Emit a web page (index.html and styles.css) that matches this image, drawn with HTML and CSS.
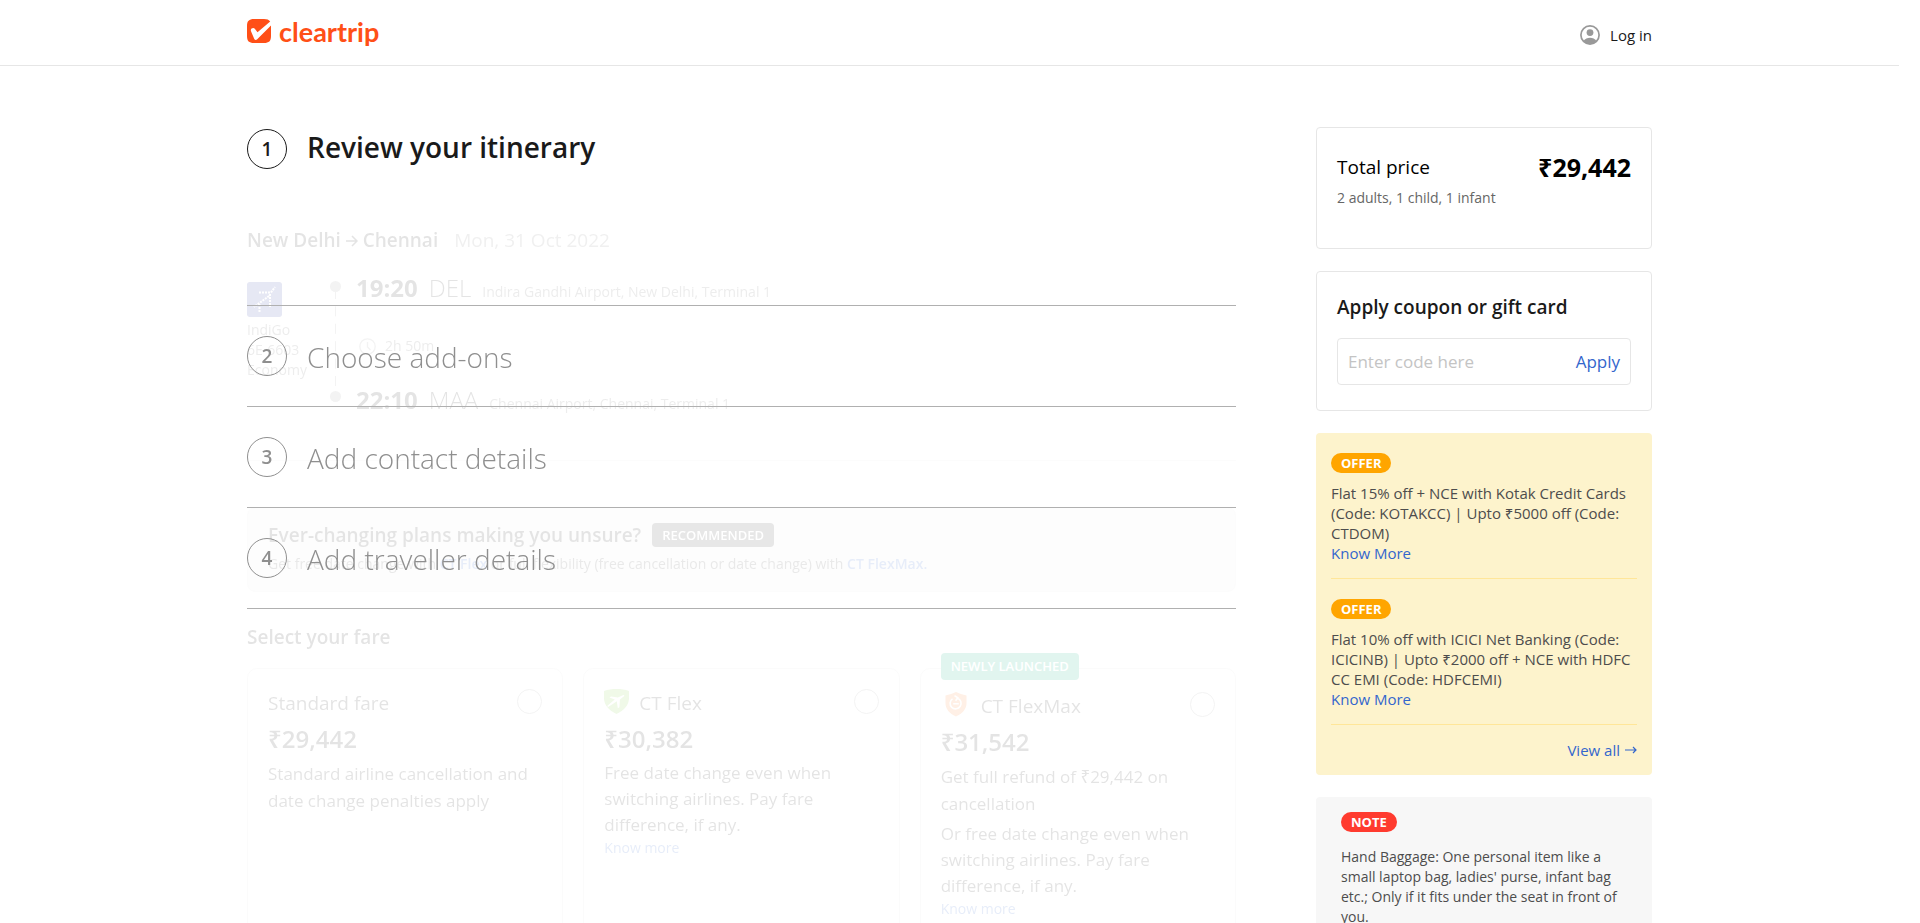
FILE: index.html
```html
<!DOCTYPE html>
<html lang="en">
<head>
<meta charset="utf-8">
<title>Cleartrip | Review your itinerary</title>
<link rel="stylesheet" href="styles.css">
</head>
<body>
<header class="topbar">
  <div class="container topbar-row">
    <a class="brand" href="#" aria-label="Cleartrip home">
      <svg class="brand-mark" viewBox="0 0 24 24" aria-hidden="true">
        <path fill="#ff4f17" d="M7 0h10c3 0 5 .8 6.200 2.600L10.500 13.200 7.800 9.700C6.300 8.200 3 9.600 4 12.200l3.200 7.600c.6 1.500 2 1.600 3 .4L24 6.500V17c0 5-2 7-7 7H7c-5 0-7-2-7-7V7c0-5 2-7 7-7z"/>
      </svg>
      <span class="brand-name">cleartrip</span>
    </a>
    <button class="login" type="button">
      <svg class="login-icon" viewBox="0 0 20 20" aria-hidden="true">
        <circle cx="10" cy="10" r="9.100" fill="none" stroke="#999" stroke-width="1.700"/>
        <circle cx="10" cy="7.600" r="3.400" fill="#999"/>
        <path fill="#999" d="M3.600 15.800C5 13.600 7.500 12.700 10 12.700s5 .9 6.400 3.100C14.800 18 12.500 19 10 19s-4.800-1-6.400-3.200z"/>
      </svg>
      Log in
    </button>
  </div>
</header>

<div class="container layout">
  <main class="main">
    <div class="step-head">
      <span class="step-num">1</span>
      <h1 class="step-title">Review your itinerary</h1>
    </div>

    <div class="stage">
      <section class="itinerary">
        <div class="route">
          <h2 class="heading">New Delhi
            <svg class="route-arrow" viewBox="0 0 12 12" aria-hidden="true"><path d="M0 6h11M6 1l5 5-5 5" fill="none" stroke="#1a1a1a" stroke-width="1.500"/></svg>
            Chennai</h2>
          <span class="route-date">Mon, 31 Oct 2022</span>
        </div>

        <div class="flight">
          <div class="airline">
            <svg class="airline-logo" viewBox="0 0 35 35" aria-hidden="true">
              <rect width="35" height="35" rx="3" fill="#2b3a9f"/>
              <g fill="none" stroke="#fff" stroke-width="2" stroke-dasharray="2 1">
                <path d="M12 10.500h12M23 12v13M22 14 7 25M12.500 22v9M24 10.500 28 5"/>
              </g>
            </svg>
            <span>IndiGo</span>
            <span>6E-6603</span>
            <span>Economy</span>
          </div>
          <svg class="rail" viewBox="0 0 11 121" aria-hidden="true">
            <path d="M5.500 8v108" stroke="#999" stroke-width="1" stroke-dasharray="10 7.400"/>
            <circle cx="5.500" cy="5.500" r="5.500" fill="#999"/>
            <circle cx="5.500" cy="115.500" r="5.500" fill="#999"/>
          </svg>
          <div class="legs">
            <div class="leg"><b class="time">19:20</b><span class="code">DEL</span><span class="airport">Indira Gandhi Airport, New Delhi, Terminal 1</span></div>
            <div class="duration">
              <svg class="clock" viewBox="0 0 17 17" aria-hidden="true"><circle cx="8.500" cy="8.500" r="7.700" fill="none" stroke="#999" stroke-width="1.300"/><path d="M8.500 4v5l3 3" fill="none" stroke="#999" stroke-width="1.300"/></svg>
              2h 50m
            </div>
            <div class="leg"><b class="time">22:10</b><span class="code">MAA</span><span class="airport">Chennai Airport, Chennai, Terminal 1</span></div>
          </div>
        </div>

        <div class="flex-banner">
          <div class="flex-banner-head">
            <h2 class="heading">Ever-changing plans making you unsure?</h2>
            <span class="tag">RECOMMENDED</span>
          </div>
          <p class="flex-banner-text">Get free date change with <b>CT Flex</b> or full flexibility (free cancellation or date change) with <b>CT FlexMax.</b></p>
        </div>

        <h2 class="heading fare-heading">Select your fare</h2>
        <div class="fares">
          <div class="fare">
            <div class="fare-head">
              <label for="fare-standard">Standard fare</label>
              <input class="radio" type="radio" name="fare" id="fare-standard">
            </div>
            <div class="fare-price">₹29,442</div>
            <p class="fare-text fare-text-loose">Standard airline cancellation and date change penalties apply</p>
          </div>
          <div class="fare">
            <div class="fare-head">
              <svg class="fare-icon" viewBox="0 0 25 25" aria-hidden="true">
                <path fill="#7dcb3c" d="M0 2C4 .6 8 0 12.500 0S21 .6 25 2v7c0 7-5 12.500-12.500 16C5 21.500 0 16 0 9z"/>
                <path fill="#fff" d="M19.500 6c1 .2 1 1 .2 1.600l-3.800 2.800-.5 7.800-1.600 1-1-7-4 2.700L4 18l-.8-1 4-3.500 3.600-3-5.300-2 1.500-1 6.800 1z"/>
              </svg>
              <label for="fare-flex">CT Flex</label>
              <input class="radio" type="radio" name="fare" id="fare-flex">
            </div>
            <div class="fare-price">₹30,382</div>
            <p class="fare-text">Free date change even when switching airlines. Pay fare difference, if any.</p>
            <a class="fare-link" href="#">Know more</a>
          </div>
          <div class="fare fare-featured">
            <span class="tag tag-new">NEWLY LAUNCHED</span>
            <div class="fare-head">
              <svg class="fare-icon fare-icon-wide" viewBox="0 0 30 25" aria-hidden="true">
                <path fill="#ff7f2a" d="M4.500 3.500Q10 2.500 15 0q5 2.500 10.500 3.500V11c0 6-4 10.500-10.500 13.500C8.500 21.500 4.500 17 4.500 11z"/>
                <path fill="none" stroke="#fff" stroke-width="1.600" d="M11.500 6.800a5.500 5.500 0 1 0 5-.6M12.200 11.700h5.600M13.500 3.600l3.300 2.200-2.200 3"/>
              </svg>
              <label for="fare-max">CT FlexMax</label>
              <input class="radio" type="radio" name="fare" id="fare-max">
            </div>
            <div class="fare-price">₹31,542</div>
            <p class="fare-text fare-text-loose">Get full refund of ₹29,442 on cancellation</p>
            <p class="fare-text fare-text-next">Or free date change even when switching airlines. Pay fare difference, if any.</p>
            <a class="fare-link" href="#">Know more</a>
          </div>
        </div>
      </section>

      <ol class="steps">
        <li class="step"><span class="step-num">2</span><h2 class="step-title">Choose add-ons</h2></li>
        <li class="step"><span class="step-num">3</span><h2 class="step-title">Add contact details</h2></li>
        <li class="step"><span class="step-num">4</span><h2 class="step-title">Add traveller details</h2></li>
      </ol>
    </div>
  </main>

  <aside class="sidebar">
    <section class="card price-card">
      <div class="total"><span>Total price</span><b class="total-value">₹29,442</b></div>
      <p class="travellers">2 adults, 1 child, 1 infant</p>
    </section>

    <form class="card coupon-card">
      <label class="coupon-label" for="coupon">Apply coupon or gift card</label>
      <div class="coupon-box">
        <input class="coupon-input" id="coupon" type="text" placeholder="Enter code here">
        <button class="coupon-apply" type="button">Apply</button>
      </div>
    </form>

    <section class="offers">
      <div class="offer">
        <span class="pill">OFFER</span>
        <p>Flat 15% off + NCE with Kotak Credit Cards (Code: KOTAKCC) | Upto ₹5000 off (Code: CTDOM)</p>
        <a href="#">Know More</a>
      </div>
      <div class="offer">
        <span class="pill">OFFER</span>
        <p>Flat 10% off with ICICI Net Banking (Code: ICICINB) | Upto ₹2000 off + NCE with HDFC CC EMI (Code: HDFCEMI)</p>
        <a href="#">Know More</a>
      </div>
      <a class="view-all" href="#">View all
        <svg class="view-arrow" viewBox="0 0 12 8" aria-hidden="true"><path d="M0 4h11M8 1l3 3-3 3" fill="none" stroke="#36c" stroke-width="1.200"/></svg>
      </a>
    </section>

    <section class="note">
      <span class="pill pill-red">NOTE</span>
      <p>Hand Baggage: One personal item like a small laptop bag, ladies' purse, infant bag etc.; Only if it fits under the seat in front of you.</p>
    </section>
  </aside>
</div>
</body>
</html>
```

FILE: styles.css
```css
* { box-sizing: border-box; }

body {
  margin: 0;
  padding-right: 21px;
  height: 100vh;
  overflow: hidden;
  background: #fff;
  color: #1a1a1a;
  font: 15px/20px "Open Sans", "Noto Sans", sans-serif;
}

h1, h2, p, ol { margin: 0; padding: 0; }
a { color: #36c; text-decoration: none; }
button { border: 0; padding: 0; background: none; color: inherit; font: inherit; cursor: pointer; }

.container { max-width: 1405px; margin: 0 auto; }

/* Header */
.topbar { border-bottom: 1px solid #e6e6e6; }
.topbar-row { display: flex; justify-content: space-between; height: 65px; padding-top: 19px; }
.brand { display: flex; gap: 8px; height: 24px; color: #ff4f17; }
.brand-mark { width: 24px; height: 24px; }
.brand-name { font: 700 27px/26px Lato, sans-serif; }
.login { display: flex; align-items: center; gap: 10px; height: 32px; }
.login-icon { width: 20px; height: 20px; }

/* Columns */
.layout { display: grid; grid-template-columns: minmax(0, 1fr) 336px; gap: 80px; padding-top: 61px; }
.main { padding-top: 2px; }

/* Step headings */
.step-head, .step { display: flex; gap: 20px; }
.step-num {
  flex: none;
  width: 40px;
  height: 40px;
  border: 1px solid #1a1a1a;
  border-radius: 50%;
  font-size: 19px;
  font-weight: 600;
  line-height: 38px;
  text-align: center;
}
.step-title { font-size: 28px; font-weight: 600; line-height: 36px; }

.stage { display: grid; }
.itinerary, .steps { grid-area: 1 / 1; }
.steps { align-self: start; z-index: 1; margin-top: 136px; border-top: 1px solid #b0b0b0; list-style: none; }
.step { padding: 30px 0; border-bottom: 1px solid #b0b0b0; color: #8f8f8f; }
.step .step-num { border-color: #8f8f8f; }
.step .step-title { font-weight: 300; line-height: 42px; height: 40px; }

.itinerary { padding-top: 59px; opacity: .12; }
.heading { font-size: 19px; font-weight: 600; line-height: 24px; }
.route { display: flex; gap: 16px; font-size: 19px; line-height: 24px; }
.route-arrow { width: 12px; height: 12px; }
.route-date { color: #808080; }
.flight { display: flex; margin-top: 21px; padding-bottom: 45px; border-bottom: 1px solid #e6e6e6; }
.airline { display: flex; flex-direction: column; width: 83px; padding-top: 9px; color: #666; font-size: 14px; }
.airline-logo { width: 35px; height: 35px; margin-bottom: 3px; }
.rail { width: 11px; height: 121px; margin-top: 8px; }
.legs { margin-left: 15px; }
.leg { display: flex; align-items: baseline; gap: 11px; line-height: 30px; }
.time { font-size: 24px; }
.code { font-size: 24px; font-weight: 300; }
.airport { color: #666; font-size: 14px; line-height: 20px; }
.duration { display: flex; align-items: center; gap: 9px; margin: 33px 0 29px 3px; color: #666; font-size: 14px; }
.clock { width: 17px; height: 17px; }

.flex-banner { margin-top: 46px; padding: 15px 20px 17px; border: 1px solid #e6e6e6; border-radius: 8px; background: #e8e8e8; }
.flex-banner-head { display: flex; gap: 11px; align-items: center; }
.flex-banner-text { margin-top: 7px; color: #444; font-size: 14px; }
.flex-banner-text b { color: #36c; font-weight: 600; }
.tag { padding: 0 10px; border-radius: 4px; background: #333; color: #fff; font-size: 13px; font-weight: 600; line-height: 24px; }
.tag-new { position: absolute; top: -16px; left: 20px; background: #00ac7a; line-height: 27px; }

.fare-heading { margin: 33px 0 19px; }
.fares { display: grid; grid-template-columns: repeat(3, 1fr); gap: 20px; }
.fare { position: relative; min-height: 300px; padding: 20px; border: 1px solid #dcdcdc; border-radius: 10px; }
.fare-featured { padding-top: 23px; }
.fare-head { display: flex; gap: 10px; font-size: 19px; line-height: 28px; }
.fare-head label { flex: 1; }
.fare-icon { width: 25px; height: 25px; }
.fare-icon-wide { width: 30px; }
.radio { appearance: none; width: 25px; height: 25px; margin: 0; border: 1px solid #999; border-radius: 50%; }
.fare-price { margin: 7px 0 6px; font-size: 24px; font-weight: 600; line-height: 30px; }
.fare-text { font-size: 17px; line-height: 26px; }
.fare-text-loose { line-height: 27px; }
.fare-text-next { margin-top: 4px; }
.fare-link { display: block; font-size: 14px; }

/* Sidebar */
.sidebar { display: flex; flex-direction: column; gap: 22px; }
.card { border: 1px solid #e6e6e6; border-radius: 4px; }
.price-card { padding: 24px 20px 40px; color: #000; }
.total { display: flex; justify-content: space-between; font-size: 19px; line-height: 30px; }
.total-value { font-size: 25px; }
.travellers { margin-top: 6px; color: #666; font-size: 14px; }
.coupon-card { padding: 23px 20px 25px; }
.coupon-label { display: block; margin-bottom: 19px; font-size: 19px; font-weight: 600; line-height: 24px; }
.coupon-box { display: flex; align-items: center; height: 47px; padding: 0 10px; border: 1px solid #e6e6e6; border-radius: 4px; font-size: 17px; }
.coupon-input { flex: 1; min-width: 0; padding: 0; border: 0; background: none; font: inherit; }
.coupon-input::placeholder { color: #c4c4c4; }
.coupon-apply { color: #36c; }

.offers { padding: 20px 15px 15px; border-radius: 4px; background: #fdf3cc; color: #4d4d4d; }
.offer { margin-bottom: 20px; padding-bottom: 15px; border-bottom: 1px solid #ffe699; }
.offer p { margin-top: 10px; }
.offer a { display: block; }
.pill { display: block; width: max-content; padding: 0 10px; border-radius: 10px; background: #ffa500; color: #fff; font-size: 13px; font-weight: 700; line-height: 20px; }
.pill-red { background: #ff3b2f; }
.view-all { display: flex; justify-content: flex-end; align-items: center; gap: 5px; margin-top: -5px; }
.view-arrow { width: 12px; height: 8px; }

.note { padding: 15px 25px; border-radius: 4px; background: #f7f7f7; color: #4d4d4d; font-size: 14px; }
.note p { margin-top: 15px; }
```
